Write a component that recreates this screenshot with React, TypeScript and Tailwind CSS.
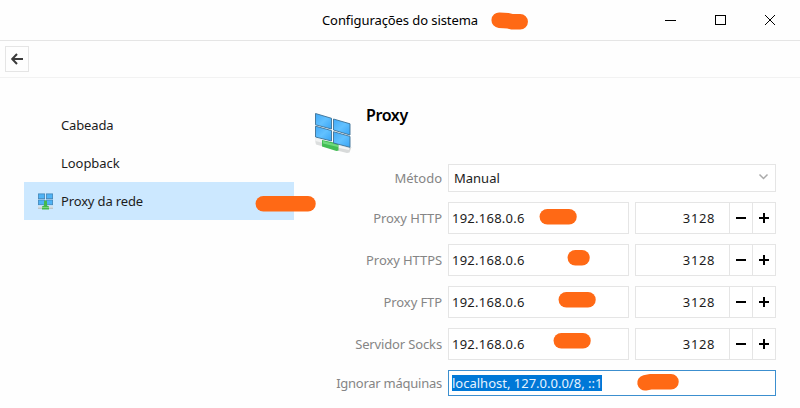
import React from "react";

type Row = { label: string; spacing: string };

const proxies: Row[] = [
  { label: "Proxy HTTP", spacing: "tracking-[-0.1px]" },
  { label: "Proxy HTTPS", spacing: "tracking-[-0.08px]" },
  { label: "Proxy FTP", spacing: "tracking-[-0.1px]" },
  { label: "Servidor Socks", spacing: "tracking-[-0.14px]" },
];

function Label({ children, spacing }: { children: string; spacing: string }) {
  return (
    <div className="flex w-[142px] shrink-0 items-center justify-end pr-[6px] text-[#858585]">
      <span className={spacing}>{children}</span>
    </div>
  );
}

function Spin({ plus }: { plus?: boolean }) {
  return (
    <button className="h-full w-[23px] shrink-0 border-l border-[#e5e5e5]">
      <svg width="22" height="30" viewBox="0 0 22 30" shapeRendering="crispEdges" className="block">
        <rect x="6" y="14" width="10" height="2" fill="#000" />
        {plus && <rect x="10" y="10" width="2" height="10" fill="#000" />}
      </svg>
    </button>
  );
}

function LargeIcon() {
  return (
    <svg width="38" height="42" viewBox="0 0 38 42" className="block">
      <defs>
        <linearGradient id="pane" x1="0" y1="0" x2="1" y2="1">
          <stop offset="0" stopColor="#42a9f7" />
          <stop offset="0.5" stopColor="#62c1ff" />
          <stop offset="1" stopColor="#38a4f5" />
        </linearGradient>
      </defs>
      <path d="M1.500 26 9 28V34.500L2 32.500Q1 30 1.500 26Z" fill="#dcdede" />
      <path d="M1.500 26 9 28V31L1.500 29Z" fill="#f1f2f2" />
      <path d="M23 33 34 35.500 37.500 35 35.500 40.500 33 41 23 38.500Z" fill="#d8dada" />
      <path d="M23 33 35 36V38L23 35.500Z" fill="#f3f4f4" />
      <path d="M8 28 24.500 31.500V38.500L22.500 39 8 34.500Z" fill="#43bd54" />
      <path d="M9 29 24 33V35L9 31.500Z" fill="#70da7e" />
      <g fill="url(#pane)" stroke="#3d7194" strokeWidth=".9">
        <path d="M1.500 1.500 17.500 6.300V17L1.500 12.800Z" />
        <path d="M19.500 7 36 11.800V23L19.500 18Z" />
        <path d="M1.500 14.200 17.500 18.600V29L1.500 25Z" />
        <path d="M19.500 19.700 36 24.400V35.300L19.500 31Z" />
      </g>
    </svg>
  );
}

function SmallIcon() {
  return (
    <svg width="17" height="17" viewBox="0 0 17 17" className="block">
      <rect x="1" y="13.500" width="15" height="2.500" fill="#bcc5c9" />
      <rect x="1" y="13.500" width="15" height="1" fill="#e6eaec" />
      <g fill="#4fb3f6" stroke="#4286b8" strokeWidth=".8">
        <rect x="1.400" y="0.900" width="6.200" height="4.700" />
        <rect x="9.400" y="0.900" width="6.200" height="4.700" />
        <rect x="1.400" y="7" width="6.200" height="4.700" />
        <rect x="9.400" y="7" width="6.200" height="4.700" />
      </g>
      <path d="M7 8.500 8.500 7 10 8.500V12.500L12 13.500V16.500H5V13.500L7 12.500Z" fill="#45b94c" />
      <path d="M5 14H12V15H5Z" fill="#7bd67e" />
    </svg>
  );
}

export default function App() {
  return (
    <div className="relative flex h-[408px] w-[800px] flex-col overflow-hidden bg-[#fefefe] font-['Noto_Sans',sans-serif] text-[13px] leading-[18px] text-[#1c1c1c]">
      <header className="flex h-[41px] shrink-0 items-center border-b border-[#e5e5e5]">
        <div className="w-[200px]" />
        <h1 className="flex-1 text-center text-black">
          <span className="tracking-[-0.08px]">Configurações do sistema</span>
        </h1>
        <div className="flex w-[200px] justify-end">
          <svg width="150" height="40" viewBox="650 0 150 40" fill="none" stroke="#000" className="block">
            <path d="M665 20.500H676M715.500 15.500H725.500V24.500H715.500Z" shapeRendering="crispEdges" />
            <path d="M765 15 775 25M775 15 765 25" />
          </svg>
        </div>
      </header>

      <nav className="flex h-[37px] shrink-0 items-start border-b border-[#f2f2f2] pl-[5px] pt-[5px]">
        <button className="flex h-[26px] w-[24px] items-center justify-center border border-[#e5e5e5]">
          <svg width="14" height="14" viewBox="0 0 14 14" fill="none" stroke="#3b3b3b" strokeWidth="2" className="block">
            <path d="M13 7H2.500M7 2 2.200 7 7 12" />
          </svg>
        </button>
      </nav>

      <main className="flex flex-1">
        <aside className="ml-[24px] w-[270px] shrink-0 pt-[28px]">
          <div className="flex h-[38px] items-center pl-[37px]"><span className="tracking-[-0.15px]">Cabeada</span></div>
          <div className="flex h-[38px] items-center pl-[37px]"><span className="tracking-[-0.05px]">Loopback</span></div>
          <div className="flex h-[38px] items-center bg-[#cce8ff] pl-[13px]">
            <SmallIcon />
            <span className="ml-[7px] tracking-[-0.15px]">Proxy da rede</span>
          </div>
        </aside>

        <section className="ml-[12px] flex w-[470px] flex-col">
          <div className="flex h-[86px] shrink-0 pl-[8px] pt-[34px]">
            <LargeIcon />
            <h2 className="-mt-[8px] ml-[14px] text-[16px] font-semibold leading-[22px] text-black"><span className="tracking-[-0.4px]">Proxy</span></h2>
          </div>
          <div className="flex flex-col gap-[10px]">
            <div className="flex h-[28px]">
              <Label spacing="tracking-[0px]">Método</Label>
              <div className="flex w-[328px] items-center justify-between border border-[#e5e5e5] bg-white pl-[5px] pr-[6px]">
                <span className="tracking-[0px]">Manual</span>
                <svg width="11" height="8" viewBox="0 0 11 8" fill="none" stroke="#aaa" strokeWidth="1.500" className="mb-[2px] block"><path d="M1.500 1.500 5.500 5.500 9.500 1.500" /></svg>
              </div>
            </div>
            {proxies.map((row) => (
              <div key={row.label} className="flex h-[32px]">
                <Label spacing={row.spacing}>{row.label}</Label>
                <div className="flex w-[181px] items-center border border-[#e5e5e5] bg-white pl-[3px]">
                  <span className="tracking-[0.25px]">192.168.0.6</span>
                </div>
                <div className="ml-[6px] flex w-[141px] items-center border border-[#e5e5e5] bg-white">
                  <div className="flex-1 pr-[14px] text-right"><span className="tracking-[0.6px]">3128</span></div>
                  <Spin />
                  <Spin plus />
                </div>
              </div>
            ))}
            <div className="flex h-[26px]">
              <Label spacing="tracking-[-0.25px]">Ignorar máquinas</Label>
              <div className="flex w-[328px] items-center border border-[#3c8fcf] bg-white pl-[3px]">
                <span className="h-[16px] w-[150px] whitespace-nowrap bg-[#0078d7] leading-[16px] tracking-[0px] text-[#e6f3ff]">localhost, 127.0.0.0/8, ::1</span>
              </div>
            </div>
          </div>
        </section>
      </main>

      <svg width="800" height="408" viewBox="0 0 800 408" className="pointer-events-none absolute inset-0" fill="none" stroke="#ff6915" strokeWidth="15.500" strokeLinecap="round" strokeLinejoin="round">
        <path d="M499.200 20.200 508 20.800 512 21.700H520.200" />
        <path d="M263.300 203.800H308" />
        <path d="M547.300 216.800H569" />
        <path d="M575.300 257.800H582" />
        <path d="M566.300 299.800H588" />
        <path d="M561.300 340.800H583" />
        <path d="M645 382.800 650 381.800H671" />
      </svg>
    </div>
  );
}
